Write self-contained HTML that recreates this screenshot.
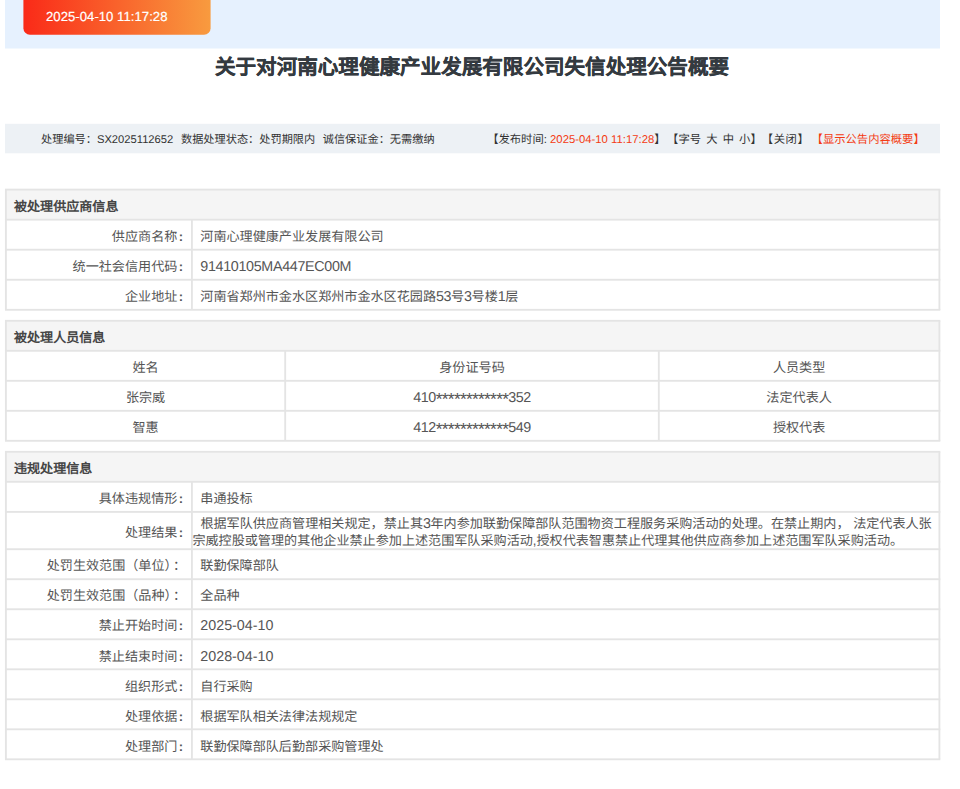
<!DOCTYPE html>
<html lang="zh-CN">
<head>
<meta charset="utf-8">
<title>关于对河南心理健康产业发展有限公司失信处理公告概要</title>
<style>
html,body{margin:0;padding:0;background:#fff;}
body{width:960px;height:789px;overflow:hidden;position:relative;font-family:"Liberation Sans",sans-serif;text-rendering:geometricPrecision;}
#shapes{position:absolute;left:0;top:0;width:960px;height:789px;display:block;}
.t{position:absolute;white-space:nowrap;transform:translateY(-50%);margin:0;padding:0;}
.t.c{transform:translate(-50%,-50%);}
.badge{color:#fff;font-size:13.2px;line-height:16px;-webkit-text-stroke:0.2px #fff;}
.title{color:#343a40;-webkit-text-stroke:0.3px #343a40;font-size:20.57px;font-weight:bold;line-height:26px;}
.info{color:#333;font-size:11.2px;line-height:16px;}
.info.r{font-size:11.32px;}
.sp{display:inline-block;}
.red,.info.red{color:#f43a12;}
.hdr{color:#464646;font-size:13.07px;font-weight:bold;line-height:18px;}
.cell{color:#555;font-size:13.1px;line-height:18px;}
.two{line-height:16.8px;}
.l{font-size:14.3px;letter-spacing:-0.45px;line-height:0;}
.col{margin-left:1.5px;font-weight:bold;}
.fcol{margin-left:2px;margin-right:-3px;}
.l.d{letter-spacing:0;}
.l.k{letter-spacing:-0.32px;}
.ind{display:inline-block;width:8px;}
.ast{font-size:17.5px;letter-spacing:-0.77px;vertical-align:-2.6px;line-height:0;}
</style>
</head>
<body>
<svg id="shapes" width="960" height="789" viewBox="0 0 960 789">
<rect x="5" y="0" width="935" height="48.5" fill="#e6f1fe" />
<defs><linearGradient id="g" x1="0" y1="0" x2="1" y2="0"><stop offset="0" stop-color="#fa2a18"/><stop offset="1" stop-color="#f89b3f"/></linearGradient></defs>
<path d="M23.4 0 H210.6 V28.2 a6.5 6.5 0 0 1 -6.5 6.5 H29.9 a6.5 6.5 0 0 1 -6.5 -6.5 Z" fill="url(#g)"/>
<rect x="5" y="123.8" width="935" height="29.5" fill="#edf1f5" />
<rect x="5.9" y="189.6" width="933.5" height="30.05" fill="#f5f5f5" />
<rect x="4.96" y="188.66" width="935.37" height="1.87" fill="#e4e4e4"/>
<rect x="4.96" y="218.72" width="935.37" height="1.87" fill="#e4e4e4"/>
<rect x="4.96" y="248.76" width="935.37" height="1.87" fill="#e4e4e4"/>
<rect x="4.96" y="278.81" width="935.37" height="1.87" fill="#e4e4e4"/>
<rect x="4.96" y="308.87" width="935.37" height="1.87" fill="#e4e4e4"/>
<rect x="4.96" y="189.60" width="1.87" height="120.20" fill="#e4e4e4"/>
<rect x="938.47" y="189.60" width="1.87" height="120.20" fill="#e4e4e4"/>
<rect x="190.97" y="219.65" width="1.87" height="90.15" fill="#e4e4e4"/>
<rect x="5.9" y="320.8" width="933.5" height="30.0" fill="#f5f5f5" />
<rect x="4.96" y="319.87" width="935.37" height="1.87" fill="#e4e4e4"/>
<rect x="4.96" y="349.87" width="935.37" height="1.87" fill="#e4e4e4"/>
<rect x="4.96" y="379.87" width="935.37" height="1.87" fill="#e4e4e4"/>
<rect x="4.96" y="409.87" width="935.37" height="1.87" fill="#e4e4e4"/>
<rect x="4.96" y="439.87" width="935.37" height="1.87" fill="#e4e4e4"/>
<rect x="4.96" y="320.80" width="1.87" height="120.00" fill="#e4e4e4"/>
<rect x="938.47" y="320.80" width="1.87" height="120.00" fill="#e4e4e4"/>
<rect x="284.26" y="350.80" width="1.87" height="90.00" fill="#e4e4e4"/>
<rect x="657.87" y="350.80" width="1.87" height="90.00" fill="#e4e4e4"/>
<rect x="5.9" y="451.8" width="933.5" height="30.0" fill="#f5f5f5" />
<rect x="4.96" y="450.87" width="935.37" height="1.87" fill="#e4e4e4"/>
<rect x="4.96" y="480.87" width="935.37" height="1.87" fill="#e4e4e4"/>
<rect x="4.96" y="510.96" width="935.37" height="1.87" fill="#e4e4e4"/>
<rect x="4.96" y="548.27" width="935.37" height="1.87" fill="#e4e4e4"/>
<rect x="4.96" y="578.27" width="935.37" height="1.87" fill="#e4e4e4"/>
<rect x="4.96" y="608.32" width="935.37" height="1.87" fill="#e4e4e4"/>
<rect x="4.96" y="638.37" width="935.37" height="1.87" fill="#e4e4e4"/>
<rect x="4.96" y="668.37" width="935.37" height="1.87" fill="#e4e4e4"/>
<rect x="4.96" y="698.37" width="935.37" height="1.87" fill="#e4e4e4"/>
<rect x="4.96" y="728.37" width="935.37" height="1.87" fill="#e4e4e4"/>
<rect x="4.96" y="758.37" width="935.37" height="1.87" fill="#e4e4e4"/>
<rect x="4.96" y="451.80" width="1.87" height="307.50" fill="#e4e4e4"/>
<rect x="938.47" y="451.80" width="1.87" height="307.50" fill="#e4e4e4"/>
<rect x="190.97" y="481.80" width="1.87" height="277.50" fill="#e4e4e4"/>
</svg>
<div class="t badge" style="left:46px;top:16.9px;">2025-04-10 11:17:28</div>
<div class="t title c" style="left:472px;top:68.4px;">关于对河南心理健康产业发展有限公司失信处理公告概要</div>
<div class="t info" style="left:41px;top:139.6px;">处理编号：SX2025112652<span class="sp" style="width:7.7px"></span>数据处理状态：处罚期限内<span class="sp" style="width:7.5px"></span>诚信保证金：无需缴纳</div>
<div class="t info r" style="left:487.2px;top:139.6px;">【发布时间: <span class="red">2025-04-10 11:17:28</span>】</div>
<div class="t info r" style="left:667.1px;top:139.6px;word-spacing:2px">【字号 大 中 小】</div>
<div class="t info r" style="left:761.8px;top:139.6px;letter-spacing:0.55px">【关闭】</div>
<div class="t info r red" style="left:811.6px;top:139.6px;">【显示公告内容概要】</div>
<div class="t hdr" style="left:14px;top:207.22px;">被处理供应商信息</div>
<div class="t cell" style="right:776.80px;top:236.88px;">供应商名称<span class="col">:</span></div>
<div class="t cell" style="left:200.3px;top:236.88px;">河南心理健康产业发展有限公司</div>
<div class="t cell" style="right:776.80px;top:266.93px;">统一社会信用代码<span class="col">:</span></div>
<div class="t cell" style="left:200.3px;top:266.93px;"><span class="l k">91410105MA447EC00M</span></div>
<div class="t cell" style="right:776.80px;top:296.97px;">企业地址<span class="col">:</span></div>
<div class="t cell" style="left:200.3px;top:296.97px;">河南省郑州市金水区郑州市金水区花园路<span class="l">53</span>号<span class="l">3</span>号楼<span class="l">1</span>层</div>
<div class="t hdr" style="left:14px;top:338.4px;">被处理人员信息</div>
<div class="t cell c" style="left:145.55px;top:368.0px;">姓名</div>
<div class="t cell c" style="left:472.0px;top:368.0px;">身份证号码</div>
<div class="t cell c" style="left:799.1px;top:368.0px;">人员类型</div>
<div class="t cell c" style="left:145.55px;top:398.0px;">张宗威</div>
<div class="t cell c" style="left:472.0px;top:398.0px;"><span class="l">410</span><span class="ast">************</span><span class="l">352</span></div>
<div class="t cell c" style="left:799.1px;top:398.0px;">法定代表人</div>
<div class="t cell c" style="left:145.55px;top:428.0px;">智惠</div>
<div class="t cell c" style="left:472.0px;top:428.0px;"><span class="l">412</span><span class="ast">************</span><span class="l">549</span></div>
<div class="t cell c" style="left:799.1px;top:428.0px;">授权代表</div>
<div class="t hdr" style="left:14px;top:469.4px;">违规处理信息</div>
<div class="t cell" style="right:776.80px;top:499.05px;">具体违规情形<span class="col">:</span></div>
<div class="t cell" style="left:200.3px;top:499.05px;">串通投标</div>
<div class="t cell" style="right:776.80px;top:532.75px;">处理结果<span class="col">:</span></div>
<div class="t cell two" style="left:192.4px;top:532.85px;"><span class="ind"></span>根据军队供应商管理相关规定，禁止其<span class="l">3</span>年内参加联勤保障部队范围物资工程服务采购活动的处理。在禁止期内， 法定代表人张<br>宗威控股或管理的其他企业禁止参加上述范围军队采购活动,授权代表智惠禁止代理其他供应商参加上述范围军队采购活动。</div>
<div class="t cell" style="right:776.80px;top:566.4px;">处罚生效范围（单位）<span class="fcol">：</span></div>
<div class="t cell" style="left:200.3px;top:566.4px;">联勤保障部队</div>
<div class="t cell" style="right:776.80px;top:596.43px;">处罚生效范围（品种）<span class="fcol">：</span></div>
<div class="t cell" style="left:200.3px;top:596.43px;">全品种</div>
<div class="t cell" style="right:776.80px;top:626.48px;">禁止开始时间<span class="col">:</span></div>
<div class="t cell" style="left:200.3px;top:626.48px;"><span class="l d">2025-04-10</span></div>
<div class="t cell" style="right:776.80px;top:656.5px;">禁止结束时间<span class="col">:</span></div>
<div class="t cell" style="left:200.3px;top:656.5px;"><span class="l d">2028-04-10</span></div>
<div class="t cell" style="right:776.80px;top:686.5px;">组织形式<span class="col">:</span></div>
<div class="t cell" style="left:200.3px;top:686.5px;">自行采购</div>
<div class="t cell" style="right:776.80px;top:716.5px;">处理依据<span class="col">:</span></div>
<div class="t cell" style="left:200.3px;top:716.5px;">根据军队相关法律法规规定</div>
<div class="t cell" style="right:776.80px;top:746.5px;">处理部门<span class="col">:</span></div>
<div class="t cell" style="left:200.3px;top:746.5px;">联勤保障部队后勤部采购管理处</div>
</body>
</html>
